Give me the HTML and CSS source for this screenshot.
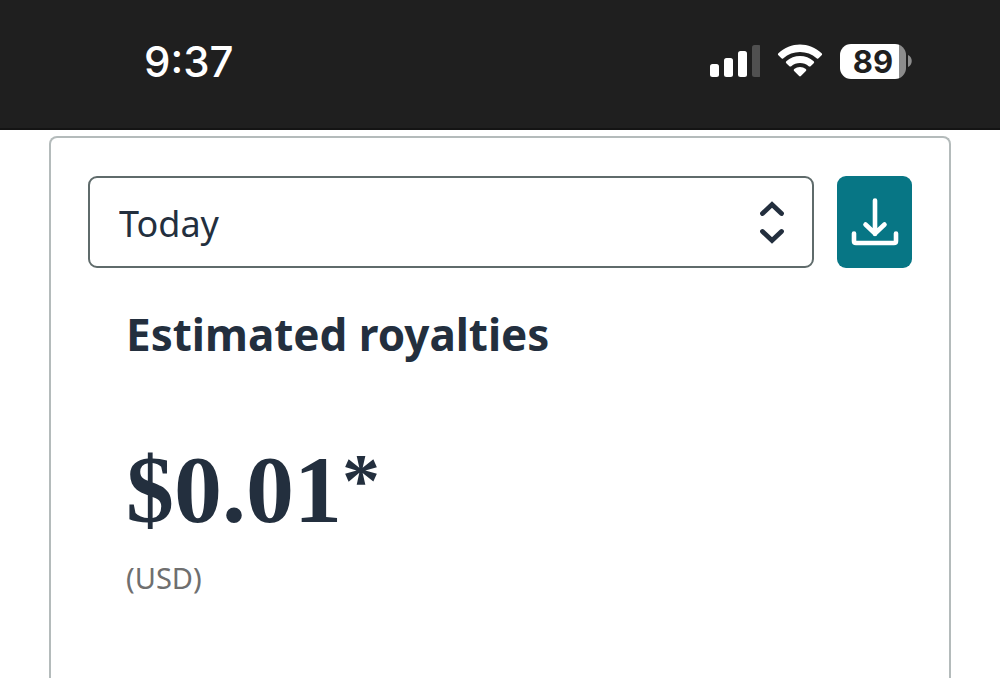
FILE: index.html
```html
<!DOCTYPE html>
<html lang="en">
<head>
<meta charset="utf-8">
<meta name="viewport" content="width=device-width, initial-scale=1">
<title>Estimated royalties</title>
<link rel="stylesheet" href="styles.css">
</head>
<body>
<header class="status-bar">
  <time class="clock">9:37</time>
  <div class="indicators">
    <svg class="signal" width="50" height="32" viewBox="0 0 50 32" aria-hidden="true">
      <rect x="0" y="19" width="9" height="13" rx="2.5" fill="#fff"/>
      <rect x="14" y="13" width="9" height="19" rx="2.5" fill="#fff"/>
      <rect x="28" y="6" width="9" height="26" rx="2.5" fill="#fff"/>
      <rect x="42" y="0" width="9" height="32" rx="2.5" fill="#505050"/>
    </svg>
    <svg class="wifi" width="46" height="34" viewBox="0 0 46 34" aria-hidden="true">
      <g fill="#fff">
        <path d="M1.4 9.3C13.400-2.300 32.600-2.300 44.600 9.300Q45.600 10.300 44.600 11.300L41.600 14.300Q40.600 15.200 39.600 14.200C30.600 5.800 15.400 5.800 6.400 14.200Q5.400 15.200 4.400 14.300L1.400 11.300Q.4 10.300 1.400 9.300Z"/>
        <path d="M9.300 17.200C16.900 10.100 29.100 10.100 36.700 17.200Q37.700 18.200 36.700 19.200L33.600 22.200Q32.700 23 31.700 22.200C27 18 19 18 14.300 22.200Q13.300 23 12.400 22.200L9.300 19.200Q8.300 18.200 9.300 17.200Z"/>
        <path d="M17.200 25C20.500 22.200 25.500 22.200 28.800 25Q29.900 26 28.900 27L23.900 32Q23 32.800 22.100 32L17.100 27Q16.100 26 17.200 25Z"/>
      </g>
    </svg>
    <div class="battery">
      <span class="battery-level">89</span>
      <svg class="battery-cap" width="4" height="12" viewBox="0 0 4 12" aria-hidden="true"><path d="M0 0C5 2 5 10 0 12Z" fill="#8c8c8c"/></svg>
    </div>
  </div>
</header>
<main class="page">
  <section class="card">
    <div class="toolbar">
      <div class="period">
        <select class="period-select" aria-label="Period">
          <option>Today</option>
        </select>
        <svg class="period-arrows" width="26" height="44" viewBox="0 0 26 44" fill="none" stroke="#232f3e" stroke-width="4.800" stroke-linecap="round" stroke-linejoin="miter" aria-hidden="true">
          <path d="M3.500 13.500L13 4.500L22.500 13.500M3.500 31.500L13 40.500L22.500 31.500"/>
        </svg>
      </div>
      <button class="download" type="button" aria-label="Download">
        <svg width="48" height="50" viewBox="0 0 48 50" fill="none" stroke="#fff" stroke-width="4.600" stroke-linecap="round" stroke-linejoin="round" aria-hidden="true">
          <path d="M24 3.500V37M14.500 27.500L24 36.500L33.500 27.500"/>
          <path d="M3 36.500V44Q3 46 5 46H43Q45 46 45 44V36.500"/>
        </svg>
      </button>
    </div>
    <div class="summary">
      <h1 class="title">Estimated royalties</h1>
      <p class="amount">$0.01<span class="amount-mark">*</span></p>
      <p class="currency">(USD)</p>
    </div>
  </section>
</main>
</body>
</html>
```
FILE: styles.css
```css
* {
  box-sizing: border-box;
}

body {
  margin: 0;
  min-height: 100vh;
  display: flex;
  flex-direction: column;
  background: #fff;
  color: #232f3e;
  font-family: "Noto Sans", "Open Sans", sans-serif;
}

.status-bar {
  display: flex;
  justify-content: space-between;
  align-items: center;
  padding: 36px 88px 42px 144px;
  background: #1f1f1f;
  border-bottom: 2px solid #141414;
  color: #fff;
}

.clock {
  padding-top: 2px;
  font: 500 42px/48px Inter, sans-serif;
}

.indicators {
  display: flex;
  align-items: center;
  gap: 17px;
}

.battery {
  display: flex;
  align-items: center;
  gap: 2px;
}

.battery-level {
  width: 66px;
  border-radius: 11px;
  background: linear-gradient(to right, #fff 59px, #8c8c8c 59px);
  color: #1f1f1f;
  font: 700 31px/35px Inter, sans-serif;
  text-align: center;
}

.page {
  flex: 1;
  display: flex;
  padding: 6px 49px 0;
}

.card {
  flex: 1;
  padding: 38px 37px;
  border: 2px solid #b4bbbb;
  border-bottom: 0;
  border-radius: 8px 8px 0 0;
}

.toolbar {
  display: flex;
  gap: 23px;
}

.period {
  position: relative;
  flex: 1;
}

.period-select {
  display: block;
  width: 100%;
  height: 92px;
  padding: 3px 56px 0 29px;
  appearance: none;
  border: 2px solid #5f6b6b;
  border-radius: 9px;
  background: #fff;
  color: #232f3e;
  font: 400 36px/48px "Noto Sans", "Open Sans", sans-serif;
}

.period-arrows {
  position: absolute;
  top: 24px;
  right: 29px;
  pointer-events: none;
}

.download {
  display: flex;
  align-items: center;
  justify-content: center;
  width: 75px;
  padding: 0;
  border: 0;
  border-radius: 9px;
  background: #077685;
}

.summary {
  padding: 34px 38px;
}

.title {
  margin: 0;
  font-size: 44px;
  font-weight: 700;
  line-height: 64px;
}

.amount {
  margin: 69px 0 0;
  font: 700 96px/110px "Liberation Serif", serif;
}

.amount-mark {
  font-size: 76px;
  line-height: 0;
  vertical-align: 16px;
}

.currency {
  margin: 13px 0 0;
  color: #6f6f6f;
  font-size: 29px;
  line-height: 40px;
}
```
